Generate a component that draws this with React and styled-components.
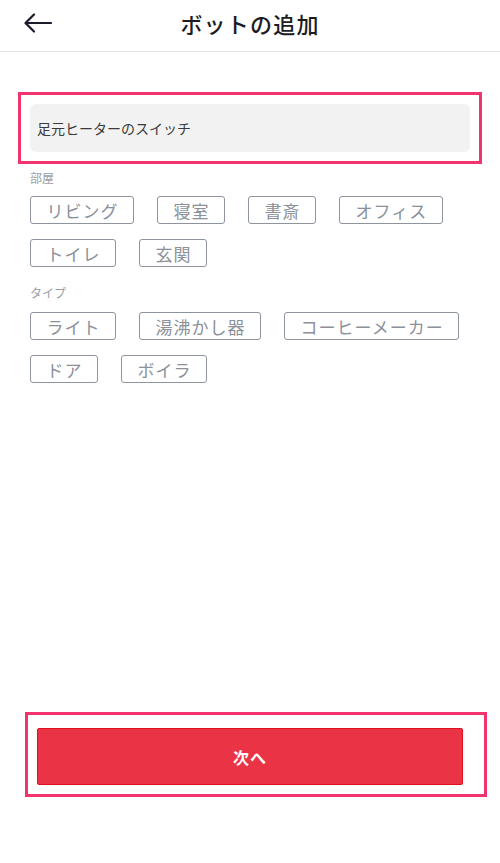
import React from "react";
import styled, { createGlobalStyle } from "styled-components";

const GlobalStyle = createGlobalStyle`
  html, body {
    margin: 0;
    padding: 0;
    background: #ffffff;
  }
  * {
    box-sizing: border-box;
  }
  body {
    font-family: "Noto Sans CJK JP", "Noto Sans", sans-serif;
    color: #1d1d25;
  }
`;

const rooms = ["リビング", "寝室", "書斎", "オフィス", "トイレ", "玄関"];
const types = ["ライト", "湯沸かし器", "コーヒーメーカー", "ドア", "ボイラ"];

const BackIcon = () => (
  <svg width="28" height="20" viewBox="0 0 28 20" fill="none">
    <path
      d="M27 10H2M10 1.5L1.5 10L10 18.5"
      stroke="#1b1c2b"
      strokeWidth="2.2"
      strokeLinecap="round"
      strokeLinejoin="round"
    />
  </svg>
);

const App = () => {
  return (
    <Page>
      <GlobalStyle />
      <Header>
        <BackButton>
          <BackIcon />
        </BackButton>
        <Title>ボットの追加</Title>
      </Header>

      <NameBox>
        <NameInput>足元ヒーターのスイッチ</NameInput>
      </NameBox>

      <Section top="6px">
        <FieldLabel>部屋</FieldLabel>
        <TagList>
          {rooms.map((r) => (
            <Tag key={r}>{r}</Tag>
          ))}
        </TagList>
      </Section>

      <Section top="18px">
        <FieldLabel spacing="11px">タイプ</FieldLabel>
        <TagList>
          {types.map((t) => (
            <Tag key={t}>{t}</Tag>
          ))}
        </TagList>
      </Section>

      <Footer>
        <ButtonBox>
          <NextButton>次へ</NextButton>
        </ButtonBox>
      </Footer>
    </Page>
  );
};

const Page = styled.div`
  min-height: 100vh;
  display: flex;
  flex-direction: column;
  background: #ffffff;
`;

const Header = styled.header`
  position: relative;
  height: 52px;
  display: flex;
  align-items: center;
  justify-content: center;
  border-bottom: 1px solid #e3e3e6;
  padding-bottom: 6px;
`;

const BackButton = styled.div`
  position: absolute;
  left: 24px;
  top: 13px;
  width: 28px;
  height: 20px;
  display: flex;
`;

const Title = styled.h1`
  margin: 0;
  font-size: 22px;
  font-weight: 500;
  letter-spacing: 1.2px;
  color: #1b1c24;
`;

const NameBox = styled.div`
  margin: 40px 18px 0;
  border: 3px solid #f2336c;
  padding: 9px;
`;

const NameInput = styled.div`
  height: 48px;
  background: #f2f2f2;
  border-radius: 6px;
  display: flex;
  align-items: center;
  padding-left: 7px;
  font-size: 14px;
  color: #3a3a3a;
`;

const Section = styled.section`
  padding: 0 30px;
  margin-top: ${({ top }) => top};
`;

const FieldLabel = styled.div`
  font-size: 12px;
  line-height: 16px;
  color: #9a9ea6;
  margin-bottom: ${({ spacing }) => spacing || "10px"};
`;

const TagList = styled.div`
  display: flex;
  flex-wrap: wrap;
  column-gap: 23px;
  row-gap: 15px;
`;

const Tag = styled.div`
  height: 28px;
  display: flex;
  align-items: center;
  padding: 0 14.5px 0 15.5px;
  border: 1.5px solid #8e949d;
  border-radius: 3px;
  font-size: 17px;
  letter-spacing: 1px;
  color: #8b9099;
`;

const Footer = styled.footer`
  margin-top: auto;
  padding: 0 13px 66px 25px;
`;

const ButtonBox = styled.div`
  border: 3px solid #f2336c;
  padding: 13px 21px 9px 9px;
`;

const NextButton = styled.button`
  width: 100%;
  height: 57px;
  background: #eb3346;
  border: 1px solid #e0101f;
  border-radius: 2px;
  color: #ffffff;
  font-family: "Noto Sans CJK JP", "Noto Sans", sans-serif;
  font-size: 16px;
  font-weight: 700;
  letter-spacing: 1px;
  cursor: pointer;
`;

export default App;
